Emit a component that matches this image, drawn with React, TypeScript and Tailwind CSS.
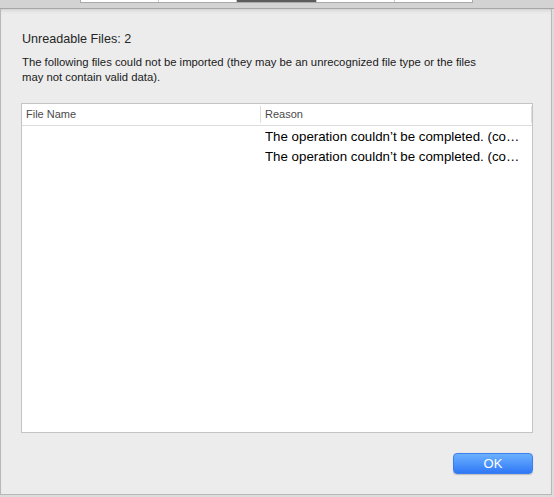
import React from 'react';

const rows = [
  { name: '', reason: 'The operation couldn\u2019t be completed. (co\u2026' },
  { name: '', reason: 'The operation couldn\u2019t be completed. (co\u2026' },
];

function SegmentedStrip() {
  const segs = [
    { w: 'w-[77px]', dark: false },
    { w: 'w-[78px]', dark: false },
    { w: 'w-[80px]', dark: true },
    { w: 'w-[78px]', dark: false },
    { w: 'w-[78px]', dark: false },
  ];
  return (
    <div className="h-[8px] bg-[#d3d3d3] pl-[80px] flex items-start">
      <div className="flex h-[3px] border-b border-[#a9a9a9] border-x">
        {segs.map((s, i) => (
          <div
            key={i}
            className={`${s.w} h-full ${s.dark ? 'bg-[#5c5c5c]' : 'bg-white'} ${i > 0 ? 'border-l border-[#c8c8c8]' : ''}`}
          />
        ))}
      </div>
    </div>
  );
}

export default function App() {
  return (
    <div
      className="w-[554px] h-[497px] bg-[#dcdcdc] flex flex-col overflow-hidden"
      style={{ fontFamily: '"Liberation Sans", Arial, sans-serif' }}
    >
      <SegmentedStrip />
      <div className="h-[1px] bg-[#a6a6a6]" />
      <div className="flex-1 flex mr-[2px] mb-[2px]">
        <div className="flex-1 flex flex-col bg-[#ececec] border-l border-r border-b border-[#b8b8b8] shadow-[inset_0_4px_4px_-3px_rgba(0,0,0,0.15)]">
          <div className="px-[21px] pt-[22px]">
            <h1 className="text-[12.6px] leading-[16px] text-[#262626]">Unreadable Files: 2</h1>
            <p className="mt-[8px] w-[470px] text-[11.3px] leading-[15px] text-[#1a1a1a]">
              The following files could not be imported (they may be an unrecognized file type or the files
              may not contain valid data).
            </p>
          </div>
          <div className="ml-[20px] mr-[18px] mt-[18px] h-[330px] bg-white border border-[#c4c4c4] flex flex-col">
            <div className="flex h-[22px] border-b border-[#dcdcdc] text-[11px] text-[#4a4a4a]">
              <div className="w-[238px] pl-[4px] flex items-center">File Name</div>
              <div className="my-[2px] w-px bg-[#dedede]" />
              <div className="flex-1 pl-[4px] flex items-center">Reason</div>
              <div className="my-[2px] w-px bg-[#dedede]" />
            </div>
            <div className="pt-[1px]">
              {rows.map((r, i) => (
                <div key={i} className="flex h-[20px] items-center text-[13.3px] text-black">
                  <div className="w-[239px] pl-[4px]">{r.name}</div>
                  <div className="flex-1 pl-[4px] whitespace-nowrap overflow-hidden">{r.reason}</div>
                </div>
              ))}
            </div>
          </div>
          <div className="flex justify-end pr-[18px] pt-[20px]">
            <button className="w-[80px] h-[21px] rounded-[4px] bg-gradient-to-b from-[#6cb0ff] to-[#2f78f6] border border-[#3b7ff0] text-white text-[13px] leading-none shadow-[0_0.5px_1px_rgba(0,0,0,0.2)]">
              OK
            </button>
          </div>
        </div>
      </div>
    </div>
  );
}
